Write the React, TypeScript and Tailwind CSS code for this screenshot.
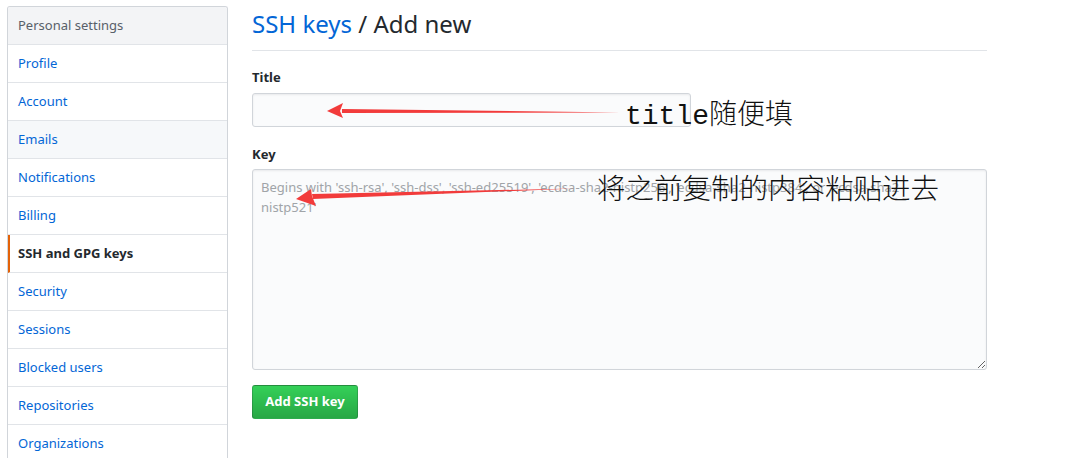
import React from "react";

const NAV_ITEMS = [
  "Profile",
  "Account",
  "Emails",
  "Notifications",
  "Billing",
  "SSH and GPG keys",
  "Security",
  "Sessions",
  "Blocked users",
  "Repositories",
  "Organizations",
];

const SELECTED = "SSH and GPG keys";
const HOVERED = "Emails";

const KEY_PLACEHOLDER =
  "Begins with 'ssh-rsa', 'ssh-dss', 'ssh-ed25519', 'ecdsa-sha2-nistp256', 'ecdsa-sha2-nistp384', or 'ecdsa-sha2-\nnistp521'";

function Sidebar() {
  return (
    <nav className="w-[221px] shrink-0 border border-[#d1d5da] rounded-t-[3px] border-b-0 overflow-hidden">
      <div className="h-[38px] flex items-center px-[10px] bg-[#f3f4f6] text-[#586069] text-[13px] border-b border-[#e1e4e8]">
        Personal settings
      </div>
      {NAV_ITEMS.map((item) => {
        const selected = item === SELECTED;
        return (
          <div
            key={item}
            className={`h-[38px] flex items-center text-[13px] border-b border-[#e1e4e8] ${
              selected
                ? "border-l-2 border-l-[#e36209] pl-[8px] font-bold text-[#24292e]"
                : "px-[10px] text-[#0366d6]"
            } ${item === HOVERED ? "bg-[#f6f8fa]" : "bg-white"}`}
          >
            {item}
          </div>
        );
      })}
    </nav>
  );
}

function Annotations() {
  return (
    <>
      <svg className="absolute left-0 top-0 pointer-events-none" width="1070" height="458">
        {/* title arrow */}
        <polygon points="620,112.5 342,109 342,113" fill="#f23b3b" />
        <polygon points="327,111 343,103 340,111 343,118" fill="#f23b3b" />
        {/* key arrow */}
        <polygon points="575,188.5 312,194 313,199" fill="#f23b3b" />
        <polygon points="296,199 311,189 312,196 316,206" fill="#f23b3b" />
      </svg>
      <div
        className="absolute left-[625px] top-[96px] text-[28px] leading-[32px] text-[#111] whitespace-nowrap pointer-events-none"
        style={{ fontFamily: '"Liberation Mono", "Noto Sans CJK SC", monospace' }}
      >
        title<span style={{ fontFamily: '"Noto Sans CJK SC", sans-serif' }} className="font-light">随便填</span>
      </div>
      <div
        className="absolute left-[597px] top-[170px] text-[28.5px] leading-[34px] font-light text-[#111] whitespace-nowrap pointer-events-none"
        style={{ fontFamily: '"Noto Sans CJK SC", sans-serif' }}
      >
        将之前复制的内容粘贴进去
      </div>
    </>
  );
}

export default function App() {
  return (
    <div
      className="relative w-[1070px] h-[458px] overflow-hidden bg-white text-[#24292e]"
      style={{ fontFamily: '"Noto Sans", "Liberation Sans", sans-serif' }}
    >
      <div className="flex pl-[7px] pt-[6px]">
        <Sidebar />
        <main className="ml-[24px] w-[735px]">
          <div className="pb-[8px] border-b border-[#e1e4e8]">
            <h2 className="text-[24px] leading-[36px] font-normal">
              <span className="text-[#0366d6]">SSH keys</span> / Add new
            </h2>
          </div>
          <form className="pt-[16px]">
            <label className="block text-[13px] leading-[20px] font-bold">Title</label>
            <input
              type="text"
              className="mt-[6px] block w-[439px] h-[34px] px-[8px] bg-[#fafbfc] border border-[#d1d5da] rounded-[3px] text-[13px] outline-none shadow-[inset_0_1px_2px_rgba(27,31,35,0.075)]"
            />
            <label className="mt-[17px] block text-[13px] leading-[20px] font-bold">Key</label>
            <textarea
              placeholder={KEY_PLACEHOLDER}
              className="mt-[5px] block w-[735px] h-[201px] px-[8px] py-[7px] bg-[#fafbfc] border border-[#d1d5da] rounded-[3px] text-[13px] leading-[20px] text-[#24292e] placeholder:text-[#a0a4a8] outline-none shadow-[inset_0_1px_2px_rgba(27,31,35,0.075)]"
            />
            <button
              type="button"
              className="mt-[15px] h-[34px] w-[106px] rounded-[3px] border border-[rgba(27,31,35,0.2)] bg-gradient-to-b from-[#34d058] to-[#28a745] text-white text-[13px] font-bold"
            >
              Add SSH key
            </button>
          </form>
        </main>
      </div>
      <Annotations />
    </div>
  );
}
